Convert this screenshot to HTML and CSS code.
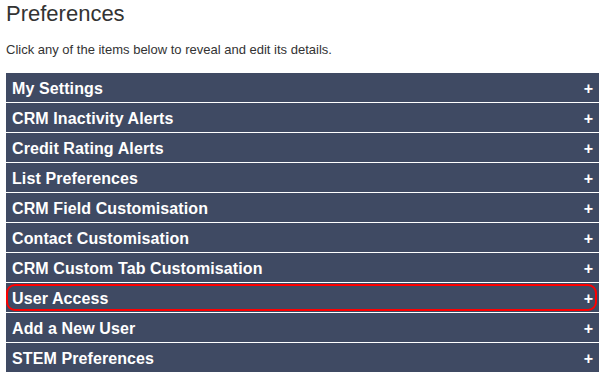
FILE: index.html
```html
<!DOCTYPE html>
<html lang="en">
<head>
    <meta charset="UTF-8">
    <meta name="viewport" content="width=device-width, initial-scale=1.0">
    <title>Preferences</title>
    <link rel="stylesheet" href="styles.css">
</head>
<body>
    <h1 class="page-title">Preferences</h1>
    <p class="intro">Click any of the items below to reveal and edit its details.</p>

    <div class="pref-list">
        <div class="pref-item"><span>My Settings</span><span class="toggle">+</span></div>
        <div class="pref-item"><span>CRM Inactivity Alerts</span><span class="toggle">+</span></div>
        <div class="pref-item"><span>Credit Rating Alerts</span><span class="toggle">+</span></div>
        <div class="pref-item"><span>List Preferences</span><span class="toggle">+</span></div>
        <div class="pref-item"><span>CRM Field Customisation</span><span class="toggle">+</span></div>
        <div class="pref-item"><span>Contact Customisation</span><span class="toggle">+</span></div>
        <div class="pref-item"><span>CRM Custom Tab Customisation</span><span class="toggle">+</span></div>
        <div class="pref-item selected"><span>User Access</span><span class="toggle">+</span></div>
        <div class="pref-item"><span>Add a New User</span><span class="toggle">+</span></div>
        <div class="pref-item"><span>STEM Preferences</span><span class="toggle">+</span></div>
    </div>
</body>
</html>
```

FILE: styles.css
```css
body {
    font-family: "Liberation Sans", Arial, sans-serif;
    background: #fff;
    color: #333;
    margin: 0;
    padding: 0 6px;
}

.page-title {
    font-size: 22px;
    font-weight: normal;
    margin: 0;
    padding-top: 1px;
    line-height: 26px;
}

.intro {
    font-size: 13px;
    margin: 15px 0 16px;
    line-height: 15px;
}

.pref-list {
    display: flex;
    flex-direction: column;
    gap: 1px;
}

.pref-item {
    display: flex;
    justify-content: space-between;
    align-items: center;
    box-sizing: border-box;
    height: 29px;
    padding: 2px 6px 0;
    background: #3f4a63;
    color: #fff;
    font-size: 16px;
    font-weight: bold;
    letter-spacing: 0.1px;
    cursor: pointer;
}

.pref-item.selected {
    position: relative;
}

.pref-item.selected::after {
    content: "";
    position: absolute;
    left: 0;
    top: 1px;
    right: 2px;
    bottom: 1px;
    border: 2px solid #f00;
    border-radius: 9px;
}

.toggle {
    font-size: 16px;
    letter-spacing: 0;
}
```
